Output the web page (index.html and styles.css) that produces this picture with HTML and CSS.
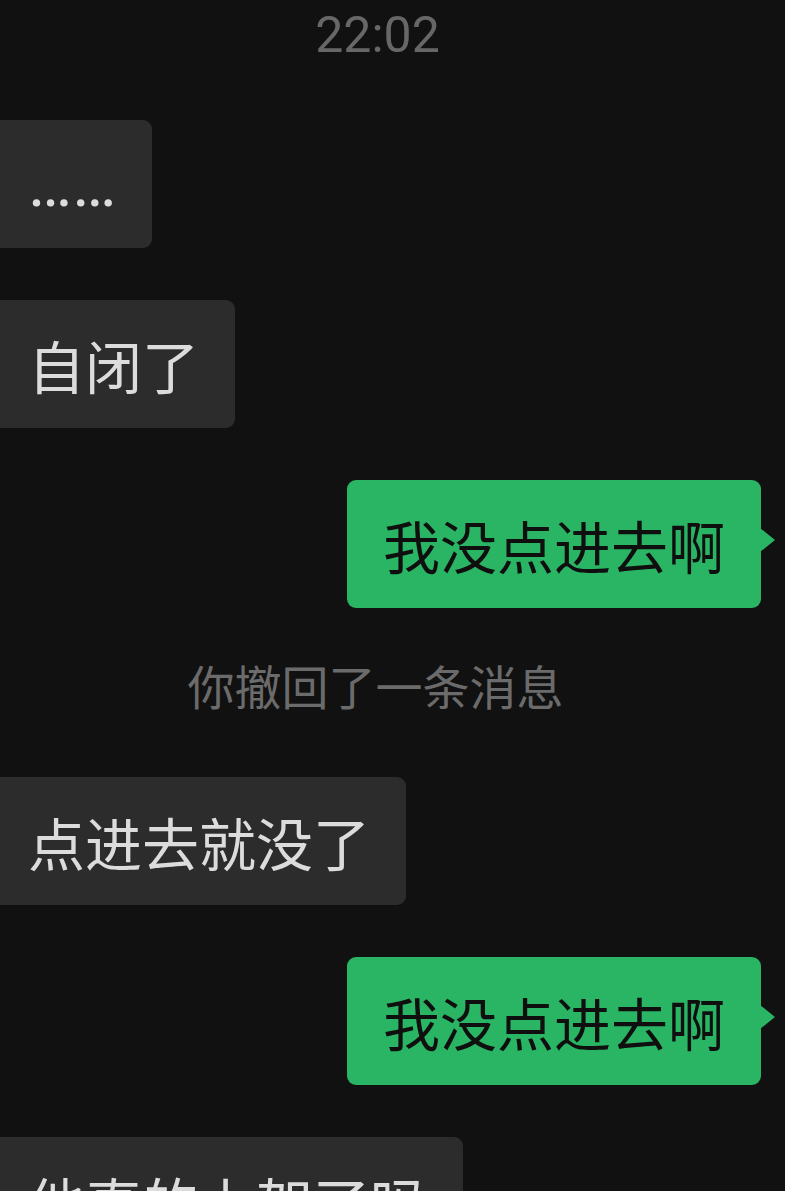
FILE: index.html
```html
<!DOCTYPE html>
<html lang="zh-CN">
<head>
<meta charset="utf-8">
<title>聊天</title>
<link rel="stylesheet" href="styles.css">
</head>
<body>
<div class="chat">
  <div class="time">22:02</div>

  <div class="row left first">
    <div class="bubble in dots">……</div>
  </div>

  <div class="row left">
    <div class="bubble in">自闭了</div>
  </div>

  <div class="row right">
    <div class="bubble out">我没点进去啊</div>
  </div>

  <div class="recall">你撤回了一条消息</div>

  <div class="row left">
    <div class="bubble in">点进去就没了</div>
  </div>

  <div class="row right">
    <div class="bubble out">我没点进去啊</div>
  </div>

  <div class="row left">
    <div class="bubble in">他真的上架了吗</div>
  </div>
</div>
</body>
</html>
```

FILE: styles.css
```css
html, body {
  margin: 0;
  padding: 0;
  background: #111111;
  height: 100%;
  overflow: hidden;
}

.chat {
  display: flex;
  flex-direction: column;
  font-family: "Noto Sans CJK SC", "Noto Sans", sans-serif;
}

.time {
  font-family: Roboto, "Noto Sans", sans-serif;
  font-size: 50px;
  line-height: 70px;
  color: #676767;
  text-align: center;
  padding-right: 30px;
  margin-bottom: 50px;
}

.row {
  display: flex;
  margin-top: 52px;
}

.row.first {
  margin-top: 0;
}

.row.left {
  justify-content: flex-start;
  margin-left: -8px;
}

.row.right {
  justify-content: flex-end;
  padding-right: 24px;
}

.bubble {
  position: relative;
  font-size: 57px;
  line-height: 56px;
  padding: 36px;
  border-radius: 9px;
  white-space: nowrap;
}

.bubble.in {
  background: #2c2c2c;
  color: #dcdcdc;
}

.bubble.dots {
  font-family: Roboto, "Noto Sans", sans-serif;
  font-size: 66px;
}

.bubble.out {
  background: #29b564;
  color: #0f0f0f;
}

.bubble.out::after {
  content: "";
  position: absolute;
  right: -14px;
  top: 48px;
  width: 0;
  height: 0;
  border-left: 15px solid #29b564;
  border-top: 12px solid transparent;
  border-bottom: 12px solid transparent;
}

.recall {
  font-size: 47px;
  line-height: 48px;
  color: #6b6b6b;
  text-align: center;
  padding-right: 34px;
  margin-top: 53px;
  margin-bottom: 16px;
}
```
